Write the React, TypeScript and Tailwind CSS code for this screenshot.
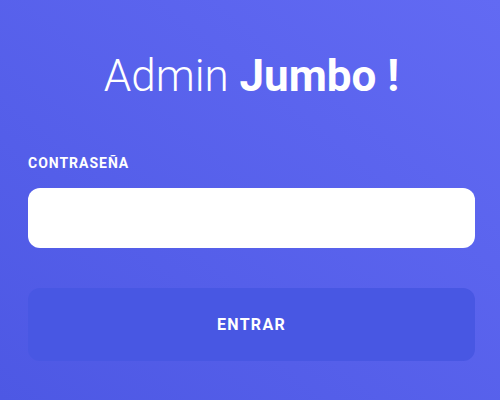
export default function App() {
  return (
    <div className="min-h-[400px] w-full bg-gradient-to-tr from-[#4d58e4] to-[#626af3] pl-[28px] pr-[25px] pt-[51px] font-['Roboto',sans-serif] text-white">
      <h1 className="text-center text-[44px] leading-[50px] font-light">
        Admin <span className="font-bold">Jumbo !</span>
      </h1>

      <form className="mt-[54px] flex flex-col" onSubmit={(e) => e.preventDefault()}>
        <label className="text-[14px] leading-4 font-bold tracking-[0.07em]">CONTRASEÑA</label>
        <input
          type="password"
          className="mt-[17px] h-[60px] w-full rounded-xl bg-white px-4 text-gray-800 outline-none"
        />
        <button
          type="submit"
          className="mt-[40px] h-[73px] w-full rounded-xl bg-[#4857e3] text-[16px] font-bold tracking-[0.08em] text-white"
        >
          ENTRAR
        </button>
      </form>
    </div>
  );
}
